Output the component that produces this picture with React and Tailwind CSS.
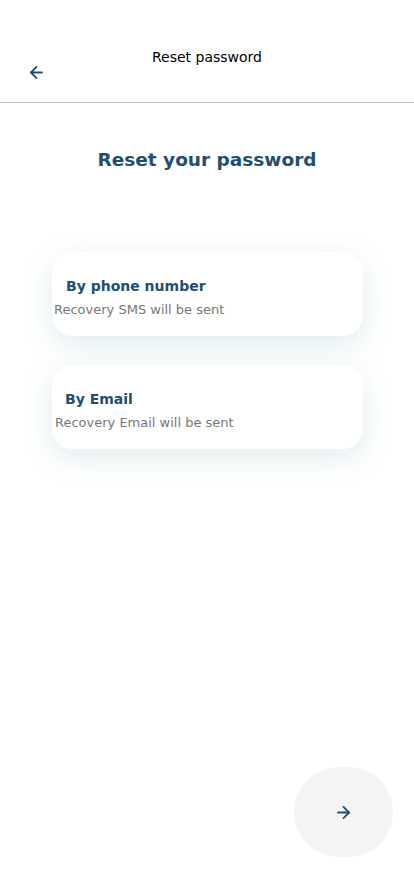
import { ArrowLeft, ArrowRight } from "lucide-react";

const font = { fontFamily: '"DejaVu Sans", "Liberation Sans", sans-serif' };

const OptionCard = ({ title, subtitle, titleIndent, subIndent }) => (
  <button className="w-[311px] h-[84px] rounded-[20px] bg-white text-left shadow-[0_8px_28px_rgba(110,170,175,0.22)] flex flex-col pt-[24px]">
    <span className={`${titleIndent} text-[14px] font-bold text-[#1f4e70] leading-5`}>{title}</span>
    <span className={`${subIndent} mt-[4px] text-[13px] text-[#777] leading-5`}>{subtitle}</span>
  </button>
);

export default function App() {
  return (
    <div className="w-[414px] h-[896px] bg-white flex flex-col relative" style={font}>
      {/* Header */}
      <div className="h-[103px] border-b border-[#c4c4c4] relative">
        <p className="pt-[47px] text-center text-[14px] text-black leading-5">Reset password</p>
        <button className="absolute left-[27px] top-[63px] text-[#1f4e70]">
          <ArrowLeft className="w-[19px] h-[19px]" strokeWidth={2.25} />
        </button>
      </div>

      <h1 className="mt-[45px] text-center text-[18.5px] font-bold text-[#1f4e70] leading-6">
        Reset your password
      </h1>

      <div className="mt-[80px] flex flex-col items-center gap-[29px] pl-[1px]">
        <OptionCard title="By phone number" subtitle="Recovery SMS will be sent" titleIndent="pl-[14px]" subIndent="pl-[2px]" />
        <OptionCard title="By Email" subtitle="Recovery Email will be sent" titleIndent="pl-[13px]" subIndent="pl-[3px]" />
      </div>

      <div className="mt-auto mb-[39px] flex justify-end pr-[21px]">
        <button className="w-[99px] h-[90px] rounded-full bg-[#f4f4f4] flex items-center justify-center text-[#1f4e70]">
          <ArrowRight className="w-[19px] h-[19px]" strokeWidth={2.25} />
        </button>
      </div>
    </div>
  );
}
